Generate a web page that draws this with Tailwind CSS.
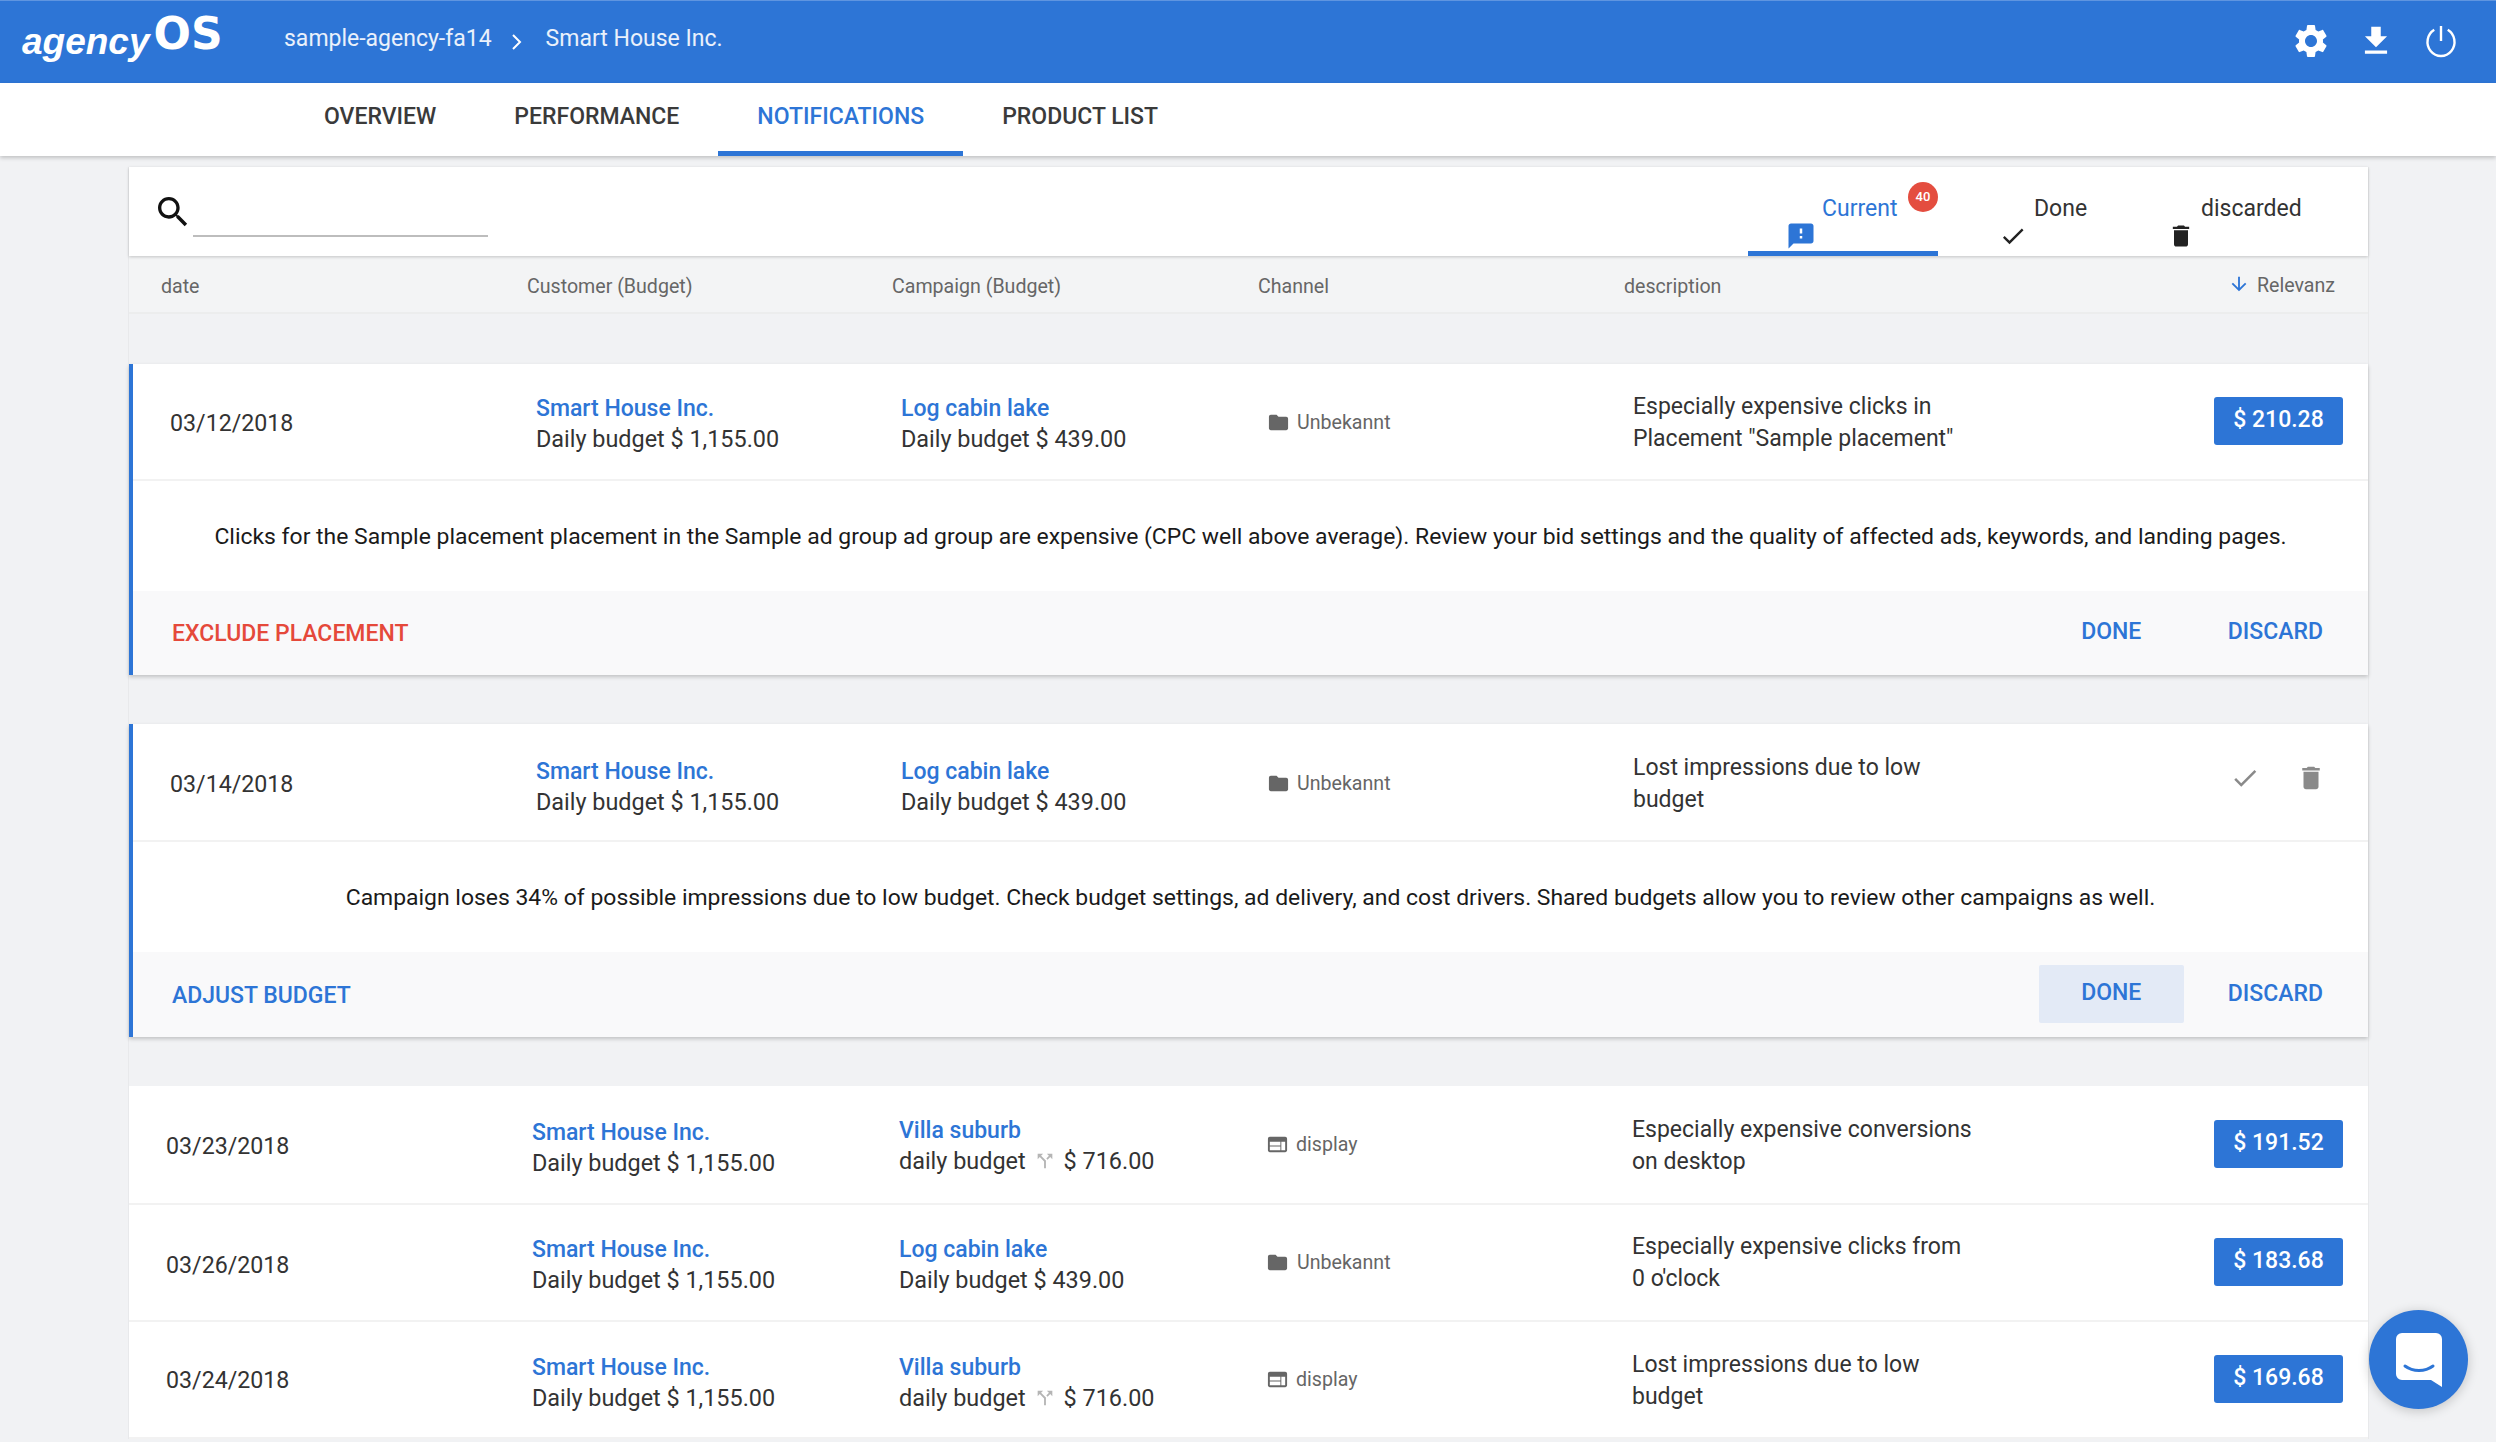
<!DOCTYPE html>
<html lang="en">
<head>
    <meta charset="UTF-8">
    <meta name="viewport" content="width=device-width, initial-scale=1.0">
    <title>agencyOS - Notifications</title>
    <script src="https://cdn.jsdelivr.net/npm/@tailwindcss/browser@4"></script>
</head>
<body class="bg-[#f1f2f4] h-screen overflow-hidden relative font-['Roboto',sans-serif] text-[23px] text-[#333]">

    <svg class="hidden">
        <symbol id="i-folder" viewBox="0 0 24 24"><path d="M10 4H4c-1.1 0-1.99.9-1.99 2L2 18c0 1.1.9 2 2 2h16c1.1 0 2-.9 2-2V8c0-1.1-.9-2-2-2h-8l-2-2z"/></symbol>
        <symbol id="i-web" viewBox="0 0 24 24"><path d="M20 4H4c-1.1 0-1.99.9-1.99 2L2 18c0 1.1.9 2 2 2h16c1.1 0 2-.9 2-2V6c0-1.1-.9-2-2-2zm-5 14H4v-4h11v4zm0-5H4V9h11v4zm5 5h-4V9h4v9z"/></symbol>
        <symbol id="i-check" viewBox="0 0 24 24"><path d="M9 16.17L4.83 12l-1.42 1.41L9 19 21 7l-1.41-1.41z"/></symbol>
        <symbol id="i-trash" viewBox="0 0 24 24"><path d="M6 19c0 1.1.9 2 2 2h8c1.1 0 2-.9 2-2V7H6v12zM19 4h-3.5l-1-1h-5l-1 1H5v2h14V4z"/></symbol>
        <symbol id="i-split" viewBox="0 0 24 24"><path d="M14 4l2.29 2.29-2.88 2.88 1.42 1.42 2.88-2.88L20 10V4zm-4 0H4v6l2.29-2.29 4.71 4.7V20h2v-8.41l-5.29-5.3z"/></symbol>
    </svg>

    <!-- top bar -->
    <header class="h-[83px] bg-[#2d75d6] border-t border-[#5f95e0] text-white flex items-center">
        <div class="w-[284px] pl-[22px] flex items-baseline pb-[6px]">
            <span class="font-['Liberation_Sans',sans-serif] italic font-bold text-[37px] leading-none">agency</span>
            <span class="font-['DejaVu_Sans',sans-serif] font-bold text-[44px] leading-none ml-[4px] -translate-y-[5px]">OS</span>
        </div>
        <span class="text-white/90 pb-[5px]">sample-agency-fa14</span>
        <svg class="w-[12px] h-[18px] ml-[19px] mr-[23px]" viewBox="0 0 12 18" fill="none" stroke="currentColor" stroke-width="2"><path d="M2 2l7 7-7 7"/></svg>
        <span class="text-white/90 pb-[5px]">Smart House Inc.</span>
        <div class="ml-auto flex items-center pr-[37px] pb-[2px]">
            <svg class="w-[40px] h-[40px]" viewBox="0 0 24 24" fill="currentColor"><path d="M19.14 12.94c.04-.3.06-.61.06-.94 0-.32-.02-.64-.07-.94l2.03-1.58c.18-.14.23-.41.12-.61l-1.92-3.32c-.12-.22-.37-.29-.59-.22l-2.39.96c-.5-.38-1.03-.7-1.62-.94l-.36-2.54c-.04-.24-.24-.41-.48-.41h-3.84c-.24 0-.43.17-.47.41l-.36 2.54c-.59.24-1.13.57-1.62.94l-2.39-.96c-.22-.08-.47 0-.59.22L2.74 8.87c-.12.21-.08.47.12.61l2.03 1.58c-.05.3-.09.63-.09.94s.02.64.07.94l-2.03 1.58c-.18.14-.23.41-.12.61l1.92 3.32c.12.22.37.29.59.22l2.39-.96c.5.38 1.03.7 1.62.94l.36 2.54c.05.24.24.41.48.41h3.84c.24 0 .44-.17.47-.41l.36-2.54c.59-.24 1.13-.56 1.62-.94l2.39.96c.22.08.47 0 .59-.22l1.92-3.32c.12-.22.07-.47-.12-.61l-2.01-1.58zM12 15.6c-1.98 0-3.6-1.62-3.6-3.6s1.62-3.6 3.6-3.6 3.6 1.62 3.6 3.6-1.62 3.6-3.6 3.6z"/></svg>
            <svg class="w-[38px] h-[38px] ml-[26px]" viewBox="0 0 24 24" fill="currentColor"><path d="M19 9h-4V3H9v6H5l7 7 7-7zM5 18v2h14v-2H5z"/></svg>
            <svg class="w-[36px] h-[36px] ml-[28px]" viewBox="0 0 24 24" fill="none" stroke="currentColor" stroke-width="1.6"><path d="M12 2v10"/><path d="M7.5 4.5a9 9.4 0 1 0 9 0"/></svg>
        </div>
    </header>

    <!-- main tabs -->
    <nav class="h-[73px] bg-white shadow-[0_2px_4px_rgba(0,0,0,0.2)] pl-[285px] flex font-medium text-[#3a3a3a] relative">
        <a class="px-[39px] flex items-center pb-[4px]">OVERVIEW</a>
        <a class="px-[39px] flex items-center pb-[4px]">PERFORMANCE</a>
        <a class="px-[39px] flex items-center text-[#2d75d6] border-b-[5px] border-[#2d75d6]">NOTIFICATIONS</a>
        <a class="px-[39px] flex items-center pb-[4px]">PRODUCT LIST</a>
    </nav>

    <main class="ml-[128px] w-[2241px] mt-[11px] border-x border-[#e8e9eb]">
        <!-- search and status tabs -->
        <div class="h-[89px] bg-white shadow-[0_1px_3px_rgba(0,0,0,0.2)] flex relative">
            <div class="flex pl-[24px] pt-[25px]">
                <svg class="w-[40px] h-[40px]" viewBox="0 0 24 24" fill="#111"><path d="M15.5 14h-.79l-.28-.27C15.41 12.59 16 11.11 16 9.5 16 5.91 13.09 3 9.5 3S3 5.91 3 9.5 5.91 16 9.5 16c1.61 0 3.09-.59 4.23-1.57l.27.28v.79l5 4.99L20.49 19l-4.99-5zm-6 0C7.01 14 5 11.99 5 9.5S7.01 5 9.5 5 14 7.01 14 9.5 11.99 14 9.5 14z"/></svg>
                <div class="w-[295px] h-[45px] border-b-2 border-[#bdbdbd]"></div>
            </div>
            <div class="ml-[1260px] w-[190px] h-[89px] border-b-[5px] border-[#2d75d6] text-[#2d75d6] relative">
                <div class="pl-[74px] pt-[28px] leading-[28px]">Current</div>
                <svg class="w-[30px] h-[30px] ml-[38px] -mt-[2px]" viewBox="0 0 24 24" fill="currentColor"><path d="M20 2H4c-1.1 0-1.99.9-1.99 2L2 22l4-4h14c1.1 0 2-.9 2-2V4c0-1.1-.9-2-2-2zm-7 12h-2v-2h2v2zm0-4h-2V6h2v4z"/></svg>
                <span class="absolute left-[160px] top-[15px] w-[30px] h-[30px] rounded-full bg-[#e44d3f] text-white text-[13px] font-medium flex items-center justify-center">40</span>
            </div>
            <div class="w-[180px] text-[#333]">
                <div class="pl-[96px] pt-[28px] leading-[28px]">Done</div>
                <svg class="w-[28px] h-[28px] ml-[61px] -mt-[1px] fill-[#222]"><use href="#i-check"/></svg>
            </div>
            <div class="w-[180px] text-[#333]">
                <div class="pl-[83px] pt-[28px] leading-[28px]">discarded</div>
                <svg class="w-[28px] h-[28px] ml-[49px] -mt-[1px] fill-[#222]"><use href="#i-trash"/></svg>
            </div>
        </div>

        <!-- table head -->
        <div class="h-[58px] bg-[#f3f4f5] border-b-2 border-[#eceded] grid grid-cols-[366px_365px_366px_366px_1fr] pl-[32px] pt-[6px] items-center text-[19.6px] text-[#666]">
            <div>date</div>
            <div>Customer (Budget)</div>
            <div>Campaign (Budget)</div>
            <div>Channel</div>
            <div class="flex justify-between pr-[33px]">
                <span>description</span>
                <span class="flex items-center -mt-[2px]"><svg class="w-[22px] h-[22px] mr-[7px] -mt-[4px] fill-[#2d75d6]" viewBox="0 0 24 24"><path d="M20 12l-1.41-1.41L13 16.17V4h-2v12.17l-5.58-5.59L4 12l8 8 8-8z"/></svg>Relevanz</span>
            </div>
        </div>

        <!-- first open notification -->
        <section class="mt-[50px] bg-white border-l-4 border-[#2d75d6] shadow-[0_2px_4px_rgba(0,0,0,0.2)]">
            <div class="h-[117px] border-b-2 border-[#f2f2f2] grid grid-cols-[366px_365px_366px_366px_1fr] pl-[37px] items-center">
                <div class="text-[23.2px] mt-[3px]">03/12/2018</div>
                <div class="leading-[30px] mt-[5px]"><div class="text-[#2d75d6] font-medium">Smart House Inc.</div><div class="text-[23.4px]">Daily budget $ 1,155.00</div></div>
                <div class="leading-[30px] mt-[5px]"><div class="text-[#2d75d6] font-medium">Log cabin lake</div><div class="text-[23.4px]">Daily budget $ 439.00</div></div>
                <div class="flex items-center text-[19.6px] text-[#666] mt-[2px]"><svg class="w-[23px] h-[23px] mr-[7px] fill-[#666]"><use href="#i-folder"/></svg>Unbekannt</div>
                <div class="flex items-center justify-between pr-[25px]">
                    <div class="w-[344px] leading-[32px] mt-[2px]">Especially expensive clicks in Placement "Sample placement"</div>
                    <span class="w-[129px] h-[48px] rounded-[3px] bg-[#2d75d6] text-white font-medium flex items-center justify-center mb-[2px]">$ 210.28</span>
                </div>
            </div>
            <div class="h-[110px] flex items-center justify-center text-[#1a1a1a] text-[22.93px] pt-[3px]">Clicks for the Sample placement placement in the Sample ad group ad group are expensive (CPC well above average). Review your bid settings and the quality of affected ads, keywords, and landing pages.</div>
            <div class="h-[84px] bg-[#f9f9fa] flex items-center pl-[39px] pr-[45px] pt-[3px] font-medium">
                <a class="text-[#e5493a]">EXCLUDE PLACEMENT</a>
                <a class="ml-auto text-[#2d75d6] w-[145px] text-center -mt-[4px]">DONE</a>
                <a class="ml-[44px] text-[#2d75d6] -mt-[4px]">DISCARD</a>
            </div>
        </section>

        <!-- second open notification -->
        <section class="mt-[49px] bg-white border-l-4 border-[#2d75d6] shadow-[0_2px_4px_rgba(0,0,0,0.2)]">
            <div class="h-[118px] border-b-2 border-[#f2f2f2] grid grid-cols-[366px_365px_366px_366px_1fr] pl-[37px] items-center">
                <div class="text-[23.2px] mt-[5px]">03/14/2018</div>
                <div class="leading-[30px] mt-[10px]"><div class="text-[#2d75d6] font-medium">Smart House Inc.</div><div class="text-[23.4px]">Daily budget $ 1,155.00</div></div>
                <div class="leading-[30px] mt-[10px]"><div class="text-[#2d75d6] font-medium">Log cabin lake</div><div class="text-[23.4px]">Daily budget $ 439.00</div></div>
                <div class="flex items-center text-[19.6px] text-[#666] mt-[4px]"><svg class="w-[23px] h-[23px] mr-[7px] fill-[#666]"><use href="#i-folder"/></svg>Unbekannt</div>
                <div class="flex items-center justify-between pr-[42px]">
                    <div class="w-[344px] leading-[32px] mt-[3px]">Lost impressions due to low budget</div>
                    <div class="flex items-center gap-[36px] mb-[8px]">
                        <svg class="w-[30px] h-[30px] fill-[#8a8a8a]"><use href="#i-check"/></svg>
                        <svg class="w-[30px] h-[30px] fill-[#8a8a8a]"><use href="#i-trash"/></svg>
                    </div>
                </div>
            </div>
            <div class="h-[110px] flex items-center justify-center text-[#1a1a1a] text-[22.93px] pt-[3px]">Campaign loses 34% of possible impressions due to low budget. Check budget settings, ad delivery, and cost drivers. Shared budgets allow you to review other campaigns as well.</div>
            <div class="h-[85px] bg-[#f9f9fa] flex items-center pl-[39px] pr-[45px] pt-[3px] font-medium">
                <a class="text-[#2d75d6]">ADJUST BUDGET</a>
                <a class="ml-auto h-[58px] w-[145px] rounded-[2px] bg-[#e3eaf6] text-[#2d75d6] flex items-center justify-center -mt-[5px]">DONE</a>
                <a class="ml-[44px] text-[#2d75d6] -mt-[4px]">DISCARD</a>
            </div>
        </section>

        <!-- remaining rows -->
        <section class="mt-[49px] bg-white">
            <div class="h-[119px] border-b-2 border-[#f2f2f2] grid grid-cols-[366px_367px_367px_366px_1fr] pl-[37px] items-center">
                <div class="text-[23.2px] mt-[4px]">03/23/2018</div>
                <div class="leading-[30px] mt-[7px]"><div class="text-[#2d75d6] font-medium">Smart House Inc.</div><div class="text-[23.4px]">Daily budget $ 1,155.00</div></div>
                <div class="leading-[30px] mt-[3px]"><div class="text-[#2d75d6] font-medium">Villa suburb</div><div class="flex items-center text-[23.4px]">daily budget<svg class="w-[22px] h-[22px] mx-[8px] fill-[#b5b5b5]"><use href="#i-split"/></svg>$ 716.00</div></div>
                <div class="flex items-center text-[19.6px] text-[#666]"><svg class="w-[23px] h-[23px] mr-[7px] fill-[#666]"><use href="#i-web"/></svg>display</div>
                <div class="flex items-center justify-between pr-[25px]">
                    <div class="w-[344px] leading-[32px] mt-[3px]">Especially expensive conversions on desktop</div>
                    <span class="w-[129px] h-[48px] rounded-[3px] bg-[#2d75d6] text-white font-medium flex items-center justify-center mb-[2px]">$ 191.52</span>
                </div>
            </div>
            <div class="h-[117px] border-b-2 border-[#f2f2f2] grid grid-cols-[366px_367px_367px_366px_1fr] pl-[37px] items-center">
                <div class="text-[23.2px] mt-[5px]">03/26/2018</div>
                <div class="leading-[30px] mt-[5px]"><div class="text-[#2d75d6] font-medium">Smart House Inc.</div><div class="text-[23.4px]">Daily budget $ 1,155.00</div></div>
                <div class="leading-[30px] mt-[5px]"><div class="text-[#2d75d6] font-medium">Log cabin lake</div><div class="text-[23.4px]">Daily budget $ 439.00</div></div>
                <div class="flex items-center text-[19.6px] text-[#666]"><svg class="w-[23px] h-[23px] mr-[8px] fill-[#666]"><use href="#i-folder"/></svg>Unbekannt</div>
                <div class="flex items-center justify-between pr-[25px]">
                    <div class="w-[344px] leading-[32px] mt-[1px]">Especially expensive clicks from 0 o'clock</div>
                    <span class="w-[129px] h-[48px] rounded-[3px] bg-[#2d75d6] text-white font-medium flex items-center justify-center mb-[2px]">$ 183.68</span>
                </div>
            </div>
            <div class="h-[117px] border-b-2 border-[#f2f2f2] grid grid-cols-[366px_367px_367px_366px_1fr] pl-[37px] items-center">
                <div class="text-[23.2px] mt-[2px]">03/24/2018</div>
                <div class="leading-[30px] mt-[7px]"><div class="text-[#2d75d6] font-medium">Smart House Inc.</div><div class="text-[23.4px]">Daily budget $ 1,155.00</div></div>
                <div class="leading-[30px] mt-[7px]"><div class="text-[#2d75d6] font-medium">Villa suburb</div><div class="flex items-center text-[23.4px]">daily budget<svg class="w-[22px] h-[22px] mx-[8px] fill-[#b5b5b5]"><use href="#i-split"/></svg>$ 716.00</div></div>
                <div class="flex items-center text-[19.6px] text-[#666]"><svg class="w-[23px] h-[23px] mr-[7px] fill-[#666]"><use href="#i-web"/></svg>display</div>
                <div class="flex items-center justify-between pr-[25px]">
                    <div class="w-[344px] leading-[32px] mt-[3px]">Lost impressions due to low budget</div>
                    <span class="w-[129px] h-[48px] rounded-[3px] bg-[#2d75d6] text-white font-medium flex items-center justify-center mb-[2px]">$ 169.68</span>
                </div>
            </div>
        </section>
    </main>

    <!-- chat launcher -->
    <div class="absolute left-[2369px] top-[1310px] w-[99px] h-[99px] rounded-full bg-[#2d75d6] shadow-[0_2px_12px_rgba(0,0,0,0.2)] flex items-center justify-center">
        <svg class="w-[46px] h-[54px]" viewBox="0 0 46 54"><path fill="#fff" d="M6 0h34a6 6 0 0 1 6 6v48l-11-7H6a6 6 0 0 1-6-6V6a6 6 0 0 1 6-6z"/><path fill="none" stroke="#2d75d6" stroke-width="3" stroke-linecap="round" d="M9 33c8 6 20 6 28 0"/></svg>
    </div>

</body>
</html>
